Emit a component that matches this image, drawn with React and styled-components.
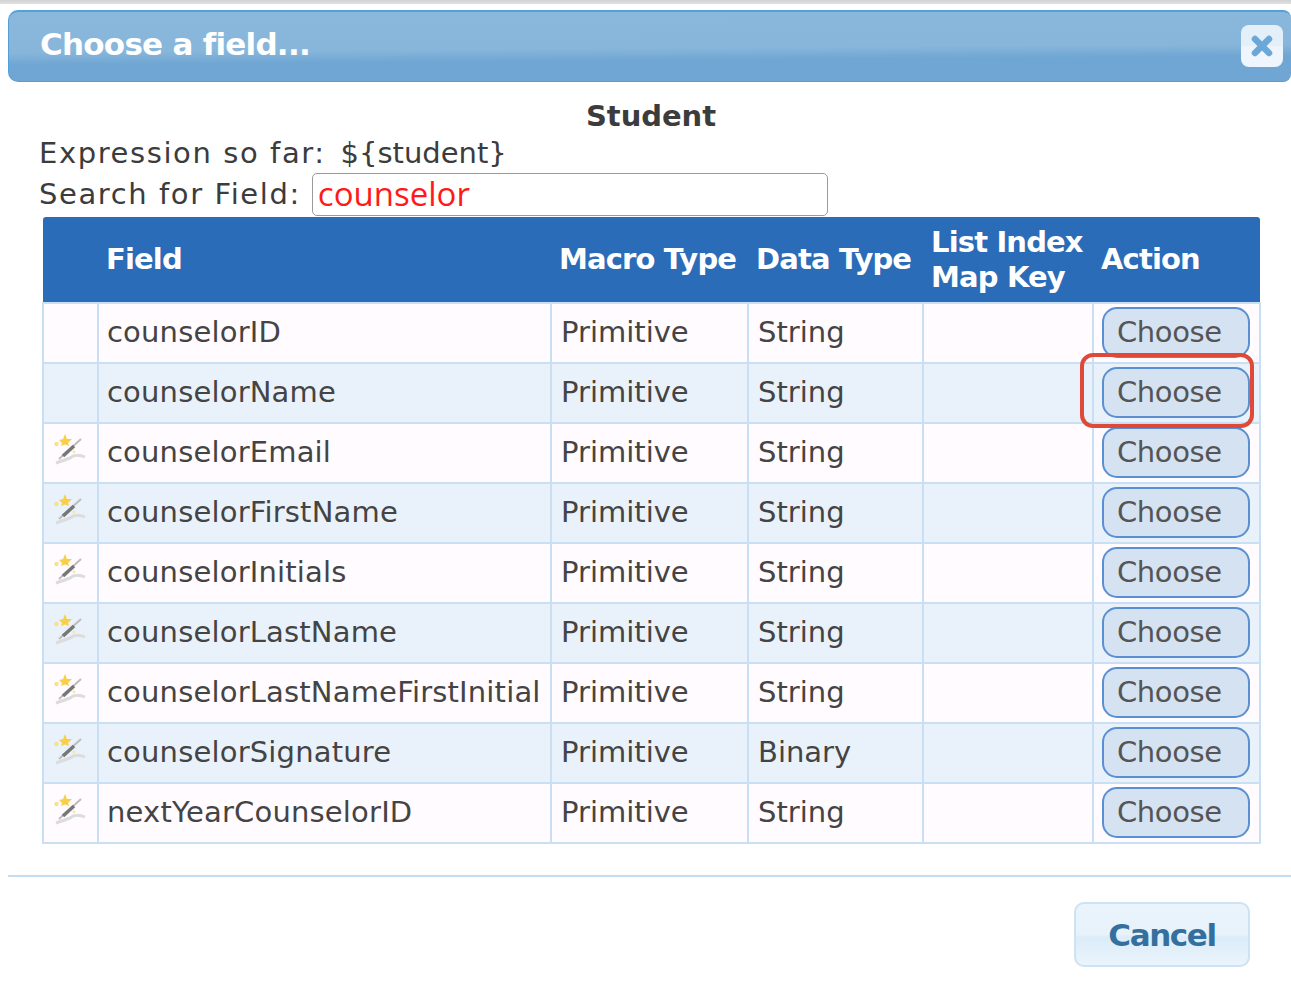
import React from "react";
import styled, { createGlobalStyle } from "styled-components";

const GlobalStyle = createGlobalStyle`
  html, body {
    margin: 0;
    padding: 0;
    background: #fff;
    overflow: hidden;
  }
  body {
    font-family: "DejaVu Sans", sans-serif;
  }
`;

const fields = [
  { name: "counselorID", data: "String" },
  { name: "counselorName", data: "String" },
  { name: "counselorEmail", data: "String", magic: true },
  { name: "counselorFirstName", data: "String", magic: true },
  { name: "counselorInitials", data: "String", magic: true },
  { name: "counselorLastName", data: "String", magic: true },
  { name: "counselorLastNameFirstInitial", data: "String", magic: true },
  { name: "counselorSignature", data: "Binary", magic: true },
  { name: "nextYearCounselorID", data: "String", magic: true },
];

const Page = styled.div`
  width: 1291px;
  height: 987px;
  overflow: hidden;
  background: #fff;
  color: #3c3c3c;
`;

const TopEdge = styled.div`
  height: 4px;
  margin-bottom: 6px;
  background: linear-gradient(#d2d2d2, #e0e0e0);
`;

const TitleBar = styled.div`
  height: 72px;
  margin-left: 8px;
  box-sizing: border-box;
  border: 1px solid #559fd8;
  border-top-width: 2px;
  border-right: 0;
  border-radius: 10px 8px 8px 10px;
  background: linear-gradient(179.6deg, #8ab8dc 0%, #88b6db 52%, #6fa6d3 68%, #6fa6d3 100%);
  display: flex;
  align-items: center;
  justify-content: space-between;
  padding: 0 8px 5px 31px;
`;

const Title = styled.h1`
  margin: 0 0 1px;
  color: #fff;
  font-size: 31px;
  font-weight: 700;
  letter-spacing: -0.75px;
`;

const CloseButton = styled.button`
  width: 42px;
  height: 42px;
  margin-top: 4px;
  padding: 0;
  border: 0;
  border-radius: 8px;
  background: linear-gradient(#e4f0f9 50%, #eef5fc 52%);
  display: flex;
  align-items: center;
  justify-content: center;
`;

const Body = styled.div`
  padding: 17px 31px 0 39px;
`;

const EntityName = styled.div`
  text-align: center;
  font-size: 29px;
  font-weight: 700;
  line-height: 35px;
  height: 33px;
  letter-spacing: -0.05px;
  padding-left: 3px;
`;

const InfoLine = styled.div`
  display: flex;
  align-items: center;
  height: 41px;
  font-size: 29px;
  letter-spacing: 1.6px;
  gap: 11px;
`;

const ExpressionValue = styled.span`
  margin-left: -7px;
  letter-spacing: 0;
`;

const SearchInput = styled.input`
  width: 516px;
  height: 43px;
  margin-top: 2px;
  box-sizing: border-box;
  padding: 0 5px 2px;
  border: 1px solid #9a9a9a;
  border-radius: 5px;
  color: #ff1a1a;
  font-family: "Open Sans", sans-serif;
  font-size: 33px;
  outline: none;
`;

const Table = styled.table`
  width: 1217px;
  margin: 3px 0 0 3px;
  border-collapse: collapse;
  table-layout: fixed;
  font-size: 29px;
`;

const HeadRow = styled.tr`
  background: #2b6cb8;
  height: 86px;
`;

const HeadCell = styled.th`
  padding: 0 0 0 8px;
  box-sizing: border-box;
  text-align: left;
  color: #fff;
  font-size: 29px;
  font-weight: 700;
  line-height: 35px;
  letter-spacing: -0.85px;
  white-space: nowrap;
  &:first-child {
    border-radius: 3px 0 0 0;
  }
  &:last-child {
    border-radius: 0 3px 0 0;
  }
`;

const Row = styled.tr`
  height: 60px;
  background: ${(props) => (props.$striped ? "#e9f2fb" : "#fffbff")};
`;

const Cell = styled.td`
  padding: 0 0 2px 9px;
  box-sizing: border-box;
  border: 2px solid #c8dff4;
  white-space: nowrap;
  color: #444;
`;

const NameCell = styled(Cell)`
  padding-left: 8px;
  letter-spacing: 0.18px;
`;

const IconCell = styled(Cell)`
  padding: 0 0 8px 9px;
  svg {
    display: block;
    filter: blur(0.5px);
  }
`;

const ActionCell = styled(Cell)`
  padding: 0 0 2px 8px;
`;

const ChooseButton = styled.button`
  display: block;
  width: 148px;
  height: 51px;
  padding: 0 0 0 13px;
  border: 2px solid #5a8fd2;
  border-radius: 15px;
  background: #d4e2f2;
  color: #555;
  font-family: "DejaVu Sans", sans-serif;
  font-size: 29px;
  letter-spacing: -0.4px;
  text-align: left;
`;

const Highlight = styled.div`
  position: absolute;
  left: 1080px;
  top: 353px;
  width: 174px;
  height: 75px;
  box-sizing: border-box;
  border: 4px solid #df4a38;
  border-radius: 13px;
  pointer-events: none;
`;

const Footer = styled.div`
  margin: 31px 0 0 8px;
  border-top: 2px solid #c3dcef;
  padding: 25px 41px 0 0;
  display: flex;
  justify-content: flex-end;
`;

const CancelButton = styled.button`
  width: 176px;
  height: 65px;
  border: 2px solid #cfe2f2;
  border-radius: 10px;
  background: linear-gradient(#eaf4fc 0%, #e8f2fb 50%, #dcecf8 54%, #eaf4fd 100%);
  color: #33709f;
  font-family: "DejaVu Sans", sans-serif;
  font-size: 31px;
  font-weight: 700;
  letter-spacing: -1.4px;
`;

const CloseIcon = () => (
  <svg width="24" height="24" viewBox="0 0 24 24">
    <path d="M5 5 L19 19 M19 5 L5 19" stroke="#6ba8d8" strokeWidth="6.5" strokeLinecap="round" />
  </svg>
);

const MagicIcon = () => (
  <svg width="34" height="34" viewBox="0 0 34 34">
    <path d="M12 2 L14 7 L19 7 L15 11 L16 14 L12 12.5 L8 14 L9 11 L6 8 L10 7 Z" fill="#f7cf4a" />
    <circle cx="3.5" cy="12" r="2.2" fill="#f9e08a" />
    <path d="M6 27 L28 7" stroke="#bdbdbd" strokeWidth="2" />
    <path d="M10 24 L21 14" stroke="#777" strokeWidth="3.5" />
    <path d="M3 31 Q12 28 17 26 Q23 21 32 25" stroke="#dcdcdc" strokeWidth="3" fill="none" />
    <circle cx="21" cy="20" r="1.4" fill="#f7e4a0" />
  </svg>
);

const App = () => (
  <Page>
    <GlobalStyle />
    <TopEdge />
    <TitleBar>
      <Title>Choose a field...</Title>
      <CloseButton aria-label="Close">
        <CloseIcon />
      </CloseButton>
    </TitleBar>
    <Body>
      <EntityName>Student</EntityName>
      <InfoLine>
        <span>Expression so far:&nbsp;</span>
        <ExpressionValue>{"${student}"}</ExpressionValue>
      </InfoLine>
      <InfoLine>
        Search for Field:
        <SearchInput defaultValue="counselor" />
      </InfoLine>
      <Table>
        <colgroup>
          <col style={{ width: 55 }} />
          <col style={{ width: 453 }} />
          <col style={{ width: 197 }} />
          <col style={{ width: 175 }} />
          <col style={{ width: 170 }} />
          <col style={{ width: 167 }} />
        </colgroup>
        <thead>
          <HeadRow>
            <HeadCell />
            <HeadCell>Field</HeadCell>
            <HeadCell>Macro Type</HeadCell>
            <HeadCell>Data Type</HeadCell>
            <HeadCell>
              List Index
              <br />
              Map Key
            </HeadCell>
            <HeadCell>Action</HeadCell>
          </HeadRow>
        </thead>
        <tbody>
          {fields.map((field, index) => (
            <Row key={field.name} $striped={index % 2 === 1}>
              <IconCell>{field.magic && <MagicIcon />}</IconCell>
              <NameCell>{field.name}</NameCell>
              <Cell>Primitive</Cell>
              <Cell>{field.data}</Cell>
              <Cell />
              <ActionCell>
                <ChooseButton>Choose</ChooseButton>
              </ActionCell>
            </Row>
          ))}
        </tbody>
      </Table>
    </Body>
    <Footer>
      <CancelButton>Cancel</CancelButton>
    </Footer>
    <Highlight />
  </Page>
);

export default App;
